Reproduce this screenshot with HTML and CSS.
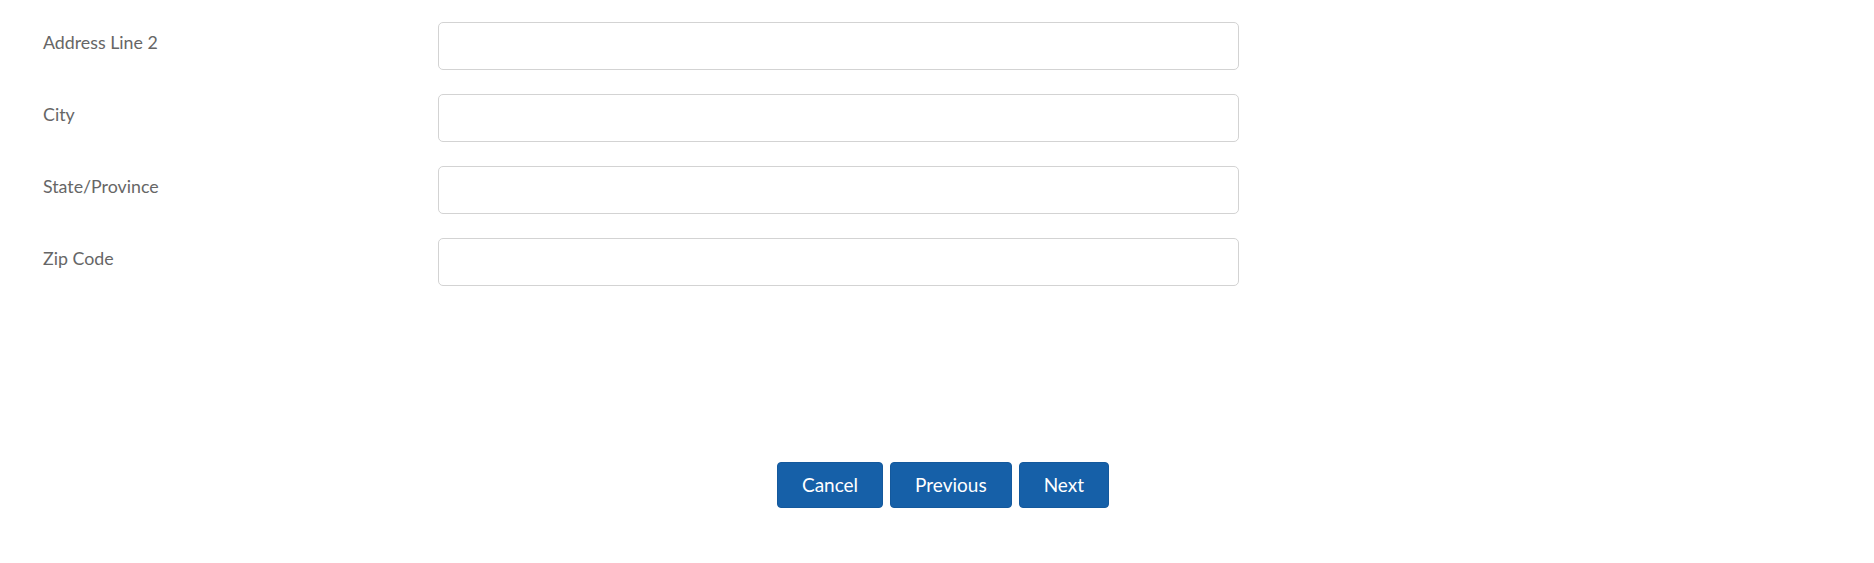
FILE: index.html
```html
<!DOCTYPE html>
<html>
<head>
<meta charset="utf-8">
<link rel="stylesheet" href="styles.css">
</head>
<body>
<div class="page">
  <form class="form">
    <label class="label">Address Line 2</label>
    <input class="field" type="text">
    <label class="label">City</label>
    <input class="field" type="text">
    <label class="label">State/Province</label>
    <input class="field" type="text">
    <label class="label">Zip Code</label>
    <input class="field" type="text">
  </form>
  <div class="actions">
    <button class="btn" type="button">Cancel</button>
    <button class="btn" type="button">Previous</button>
    <button class="btn" type="button">Next</button>
  </div>
</div>
</body>
</html>
```

FILE: styles.css
```css
html, body {
  margin: 0;
  padding: 0;
  background: #ffffff;
}

body {
  font-family: Lato, "Liberation Sans", sans-serif;
}

.page {
  padding-top: 22px;
}

.form {
  display: grid;
  grid-template-columns: 395px 801px;
  row-gap: 24px;
  padding-left: 43px;
  margin: 0;
}

.label {
  font-size: 17.8px;
  line-height: 20px;
  color: #666666;
  padding-top: 10px;
}

.field {
  box-sizing: border-box;
  height: 48px;
  width: 801px;
  margin: 0;
  border: 1px solid #d3d3d3;
  border-radius: 5px;
  background: #ffffff;
  font-family: inherit;
  font-size: 16px;
  padding: 0 12px;
}

.actions {
  display: flex;
  justify-content: center;
  gap: 7px;
  margin-top: 176px;
  padding-left: 12px;
}

.btn {
  box-sizing: border-box;
  height: 46px;
  padding: 0 24px;
  border: 1px solid #14599d;
  border-radius: 4px;
  background: #1660a8;
  color: #ffffff;
  font-family: Lato, "Liberation Sans", sans-serif;
  font-size: 19px;
  line-height: 22px;
}
```
